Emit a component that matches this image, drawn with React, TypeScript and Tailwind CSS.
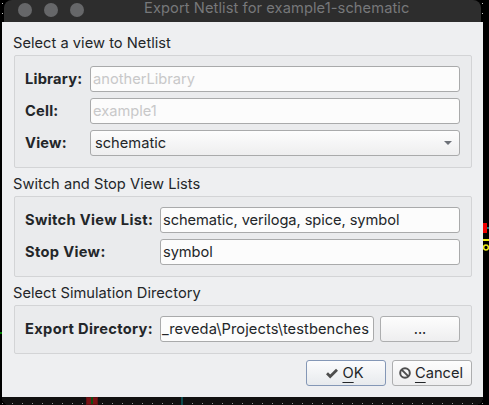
import React from 'react';

const fieldClass =
  'flex h-[26px] items-center overflow-hidden whitespace-nowrap rounded-[3px] border border-[#a9aaab] bg-[#fcfcfc] px-[2px]';
const buttonClass =
  'flex h-[26px] w-20 items-center justify-center rounded-[3px] border border-[#adaeaf] bg-linear-to-b from-[#fdfdfd] to-[#eeeeef] whitespace-nowrap';

function Group({ title, className, children }: { title: string; className: string; children: React.ReactNode }) {
  return (
    <section className={className}>
      <h2 className="ml-[-1px] h-[22px] leading-5 tracking-[0.02px]">{title}</h2>
      <div className="flex flex-col gap-1.5 rounded-[2px] border border-[#d3d4d6] bg-[#eaebed] pr-[11px] pl-[10px] pt-[10px] pb-[11px]">
        {children}
      </div>
    </section>
  );
}

function Row({ label, labelClass, children }: { label: string; labelClass: string; children: React.ReactNode }) {
  return (
    <div className="flex h-[26px] items-center">
      <label className={`${labelClass} shrink-0 whitespace-nowrap font-bold`}>{label}</label>
      {children}
    </div>
  );
}

function CanvasBackdrop() {
  return (
    <svg className="absolute inset-0" width="489" height="405" shapeRendering="crispEdges">
      <defs>
        <pattern id="grid" x="2" y="3" width="10" height="10" patternUnits="userSpaceOnUse">
          <rect width="1" height="1" fill="#c8c8c8" />
        </pattern>
      </defs>
      <rect width="489" height="405" fill="#000" />
      <path d="M2 390H483V397Q483 405 475 405H10Q2 405 2 397Z" fill="#111" />
      <rect y="400" width="489" height="5" fill="url(#grid)" opacity=".75" />
      <rect width="4" height="20" fill="url(#grid)" />
      <rect x="482" width="2" height="20" fill="url(#grid)" />
      <rect x="0" y="332" width="2" height="2" fill="#008000" />
      <rect x="86" y="397" width="12" height="8" fill="#5c1012" />
      <rect x="87" y="398" width="10" height="6" fill="#7b1113" />
      <rect x="91" y="397" width="2" height="7" fill="#0d4f12" />
      <rect x="181" y="397" width="2" height="8" fill="#0c4a4c" />
      <rect x="483" y="223" width="4" height="10" fill="#f00000" />
      <rect x="487" y="227" width="2" height="2" fill="#087b80" />
      <rect x="483" y="239" width="6" height="2" fill="#f0ef18" />
      <g shapeRendering="auto">
        <circle cx="486" cy="247.5" r="2.4" fill="none" stroke="#f0ef18" strokeWidth="1.5" />
      </g>
    </svg>
  );
}

export default function App() {
  return (
    <main className="relative h-[405px] w-[489px] overflow-hidden bg-black font-['Inter',sans-serif] text-[14.67px] text-[#232629]">
      <CanvasBackdrop />
      <div className="relative ml-[2px] h-[397px] w-[481px]">
        <header className="mx-[2px] flex h-[22px] rounded-t-[8px] bg-[#2d2d2d] text-[#77787a]">
          <div className="flex h-5 shrink-0 items-center gap-3 pl-[14px]">
            <span className="size-[14px] rounded-full bg-[#666769]" />
            <span className="size-[14px] rounded-full bg-[#666769]" />
            <span className="size-[14px] rounded-full bg-[#666769]" />
          </div>
          <h1 className="ml-[60px] whitespace-nowrap leading-[16px] tracking-[0.08px]">
            Export Netlist for example1-schematic
          </h1>
        </header>
        <div className="h-[375px] bg-[#eeeff1] pt-[11px] pr-[11px] pl-3">
          <Group title="Select a view to Netlist" className="h-[141px]">
            <Row label="Library:" labelClass="w-[65px] tracking-[0.2px]">
              <div className={`${fieldClass} w-[370px] text-[#c8c8c9]`}>anotherLibrary</div>
            </Row>
            <Row label="Cell:" labelClass="w-[65px] tracking-[0.2px]">
              <div className={`${fieldClass} w-[370px] text-[#c8c8c9]`}>example1</div>
            </Row>
            <Row label="View:" labelClass="w-[65px] tracking-[0.2px]">
              <div className="flex h-[26px] w-[370px] items-center justify-between rounded-[3px] border border-[#a9aaab] bg-linear-to-b from-[#fdfdfd] to-[#eeeeef] pr-[7px] pl-1">
                <span>schematic</span>
                <svg width="8" height="4" viewBox="0 0 8 4">
                  <path d="M0 0H8L4 4Z" fill="#6d7178" />
                </svg>
              </div>
            </Row>
          </Group>
          <Group title="Switch and Stop View Lists" className="h-[109px]">
            <Row label="Switch View List:" labelClass="w-[135px] tracking-[0.33px]">
              <div className={`${fieldClass} w-[300px] tracking-[-0.07px]`}>schematic, veriloga, spice, symbol</div>
            </Row>
            <Row label="Stop View:" labelClass="w-[135px] tracking-[0.33px]">
              <div className={`${fieldClass} w-[300px] tracking-[-0.07px]`}>symbol</div>
            </Row>
          </Group>
          <Group title="Select Simulation Directory" className="h-[77px]">
            <Row label="Export Directory:" labelClass="w-[135px] tracking-[0.33px]">
              <div className={`${fieldClass} w-[214px] justify-end pr-1 tracking-[0.08px]`}>_reveda\Projects\testbenches</div>
              <button className={`${buttonClass} ml-1.5`}>...</button>
            </Row>
          </Group>
          <footer className="flex justify-end gap-1.5">
            <button className="flex h-[26px] w-20 items-center justify-center gap-1 rounded-[3px] border border-[#8497b6] bg-linear-to-b from-[#fcfcfd] to-[#e7eaed] pr-[2px]">
              <svg width="12" height="12" viewBox="0 0 12 12">
                <path d="M1 6.3 4.2 9.5 11 2.7" fill="none" stroke="#4d4d4d" strokeWidth="2.8" />
              </svg>
              <span><span className="underline decoration-1 underline-offset-[4px]">O</span>K</span>
            </button>
            <button className={`${buttonClass} gap-1 pr-[2px]`}>
              <svg width="12" height="12" viewBox="0 0 12 12" fill="none" stroke="#4d4d4d" strokeWidth="2">
                <circle cx="6" cy="6" r="4.8" />
                <path d="m2.6 2.6 6.8 6.8" />
              </svg>
              <span><span className="underline decoration-1 underline-offset-[4px]">C</span>ancel</span>
            </button>
          </footer>
        </div>
      </div>
    </main>
  );
}
